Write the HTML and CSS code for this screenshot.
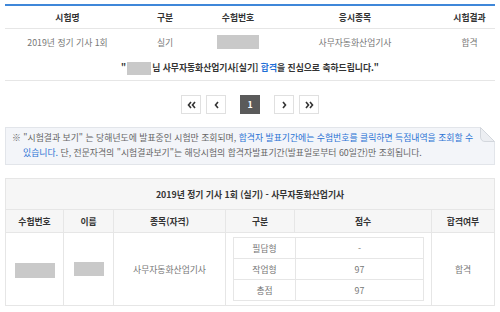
FILE: index.html
```html
<!DOCTYPE html>
<html lang="ko">
<head>
    <meta charset="UTF-8">
    <meta name="viewport" content="width=device-width, initial-scale=1.0">
    <title>시험결과 조회</title>
    <link rel="stylesheet" href="styles.css">
</head>
<body>
    <div class="page">
        <table class="result">
            <colgroup>
                <col style="width:125px"><col style="width:70px"><col style="width:76px"><col style="width:158px"><col>
            </colgroup>
            <thead>
                <tr><th>시험명</th><th>구분</th><th>수험번호</th><th>응시종목</th><th class="last">시험결과</th></tr>
            </thead>
            <tbody>
                <tr>
                    <td>2019년 정기 기사 1회</td>
                    <td>실기</td>
                    <td><span class="mask mask-num"></span></td>
                    <td>사무자동화산업기사</td>
                    <td class="last">합격</td>
                </tr>
            </tbody>
        </table>
        <p class="congrats">"<span class="mask mask-name"></span>님 사무자동화산업기사[실기] <em>합격</em>을 진심으로 축하드립니다."</p>

        <div class="pager">
            <a class="btn" href="#">
                <svg width="9" height="8" viewBox="0 0 9 8"><path d="M4 1 L1.5 4 L4 7 M8 1 L5.5 4 L8 7" fill="none" stroke="#333" stroke-width="1.6"/></svg>
            </a>
            <a class="btn" href="#">
                <svg width="5" height="8" viewBox="0 0 5 8"><path d="M4 1 L1.5 4 L4 7" fill="none" stroke="#333" stroke-width="1.6"/></svg>
            </a>
            <a class="btn active" href="#">1</a>
            <a class="btn" href="#">
                <svg width="5" height="8" viewBox="0 0 5 8"><path d="M1 1 L3.5 4 L1 7" fill="none" stroke="#333" stroke-width="1.6"/></svg>
            </a>
            <a class="btn" href="#">
                <svg width="9" height="8" viewBox="0 0 9 8"><path d="M1 1 L3.5 4 L1 7 M5 1 L7.5 4 L5 7" fill="none" stroke="#333" stroke-width="1.6"/></svg>
            </a>
        </div>

        <div class="notice">
            <p>※ "시험결과 보기" 는 당해년도에 발표중인 시험만 조회되며, <span class="blue">합격자 발표기간에는 수험번호를 클릭하면 득점내역을 조회할 수</span> <span class="blue">있습니다.</span> 단, 전문자격의 "시험결과보기"는 해당시험의 합격자발표기간(발표일로부터 60일간)만 조회됩니다.</p>
            <svg class="fold" width="15" height="15" viewBox="0 0 15 15">
                <polygon points="0,0 15,0 15,15" fill="#fff"/>
                <path d="M0.5 0.5 L0.5 10 Q1 14.5 5 14.5 L14.5 14.5 Z" fill="#eceef2" stroke="#d3d7dd"/>
            </svg>
        </div>

        <table class="score">
            <colgroup>
                <col style="width:58px"><col style="width:50px"><col style="width:112px"><col style="width:69px"><col style="width:137px"><col>
            </colgroup>
            <thead>
                <tr><th class="title" colspan="6">2019년 정기 기사 1회 (실기) - 사무자동화산업기사</th></tr>
                <tr><th>수험번호</th><th>이름</th><th>종목(자격)</th><th>구분</th><th>점수</th><th>합격여부</th></tr>
            </thead>
            <tbody>
                <tr class="body-row">
                    <td><span class="mask mask-id"></span></td>
                    <td><span class="mask mask-person"></span></td>
                    <td>사무자동화산업기사</td>
                    <td class="inner-cell" colspan="2">
                        <table class="inner">
                            <colgroup><col style="width:62px"><col></colgroup>
                            <tr><td>필답형</td><td>-</td></tr>
                            <tr><td>작업형</td><td>97</td></tr>
                            <tr><td>총점</td><td>97</td></tr>
                        </table>
                    </td>
                    <td>합격</td>
                </tr>
            </tbody>
        </table>
    </div>
</body>
</html>
```

FILE: styles.css
```css
body {
    margin: 0;
    font-family: "Noto Sans CJK KR", "Noto Sans", sans-serif;
    font-size: 8.8px;
    color: #777;
    background: #fff;
}
.page {
    padding: 4px 5px 0;
}
table {
    border-collapse: collapse;
    table-layout: fixed;
}
.result {
    width: 100%;
    border-top: 2px solid #3f87d9;
}
.result th {
    height: 22px;
    padding: 0;
    color: #333;
    font-weight: bold;
    border-bottom: 1px solid #e6e6e6;
}
.result td {
    height: 26px;
    padding: 0;
    text-align: center;
}
.result .last {
    padding-left: 10px;
}
.mask {
    display: inline-block;
    vertical-align: middle;
    background: #c9c9c9;
}
.mask-num {
    width: 42px;
    height: 14px;
}
.mask-name {
    width: 24px;
    height: 13px;
    margin: 0 1px;
}
.mask-id {
    width: 40px;
    height: 15px;
    margin-top: 2px;
}
.mask-person {
    width: 30px;
    height: 14px;
}
.congrats {
    margin: 0;
    height: 25px;
    line-height: 25px;
    text-align: center;
    font-weight: bold;
    color: #333;
    border-bottom: 1px solid #e6e6e6;
}
.congrats em {
    font-style: normal;
    color: #1f6fd6;
}
.pager {
    display: flex;
    justify-content: center;
    gap: 5px;
    margin-top: 14px;
}
.btn {
    box-sizing: border-box;
    width: 20px;
    height: 19px;
    display: flex;
    align-items: center;
    justify-content: center;
    border: 1px solid #e0e0e0;
    background: #fff;
    text-decoration: none;
}
.btn.active {
    margin: 0 9px;
    border: none;
    background: #5a5a5a;
    color: #fff;
    font-weight: bold;
}
.notice {
    position: relative;
    margin-top: 13px;
    background: #f3f5f9;
    border: 1px solid #e2e5ea;
}
.notice p {
    margin: 0;
    padding: 2px 13px 4px 17px;
    text-indent: -11px;
    line-height: 15px;
    font-size: 8.85px;
    color: #666;
}
.notice .blue {
    color: #2a72d4;
}
.fold {
    position: absolute;
    top: -1px;
    right: -1px;
}
.score {
    width: 100%;
    margin-top: 13px;
    border: 1px solid #e6e6e6;
}
.score th {
    height: 22px;
    padding: 0;
    background: #f6f6f6;
    color: #333;
    font-weight: bold;
    border: 1px solid #e6e6e6;
}
.score th.title {
    height: 30px;
}
.body-row > td {
    height: 72px;
    padding: 0;
    text-align: center;
    border: 1px solid #e6e6e6;
}
.body-row > td.inner-cell {
    height: auto;
    padding: 3px 7px 3px;
}
.inner {
    width: 100%;
}
.inner td {
    height: 20px;
    padding: 0;
    text-align: center;
    border: 1px solid #e6e6e6;
}
```
